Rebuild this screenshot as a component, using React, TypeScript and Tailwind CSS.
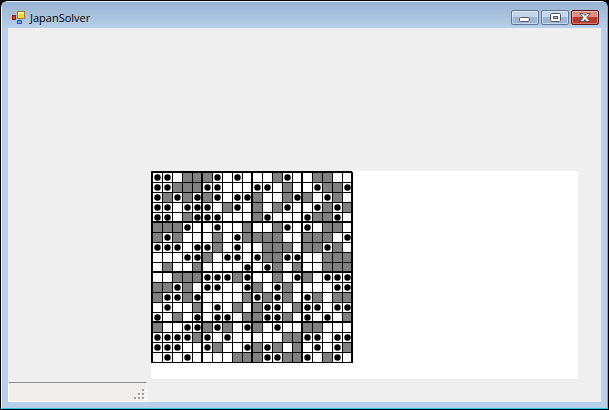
import React from "react";

const ROWS: string[] = [
  "oo.###o.o...#o..##..",
  "oo###oo...oo.#..o##o",
  "o#o#o#o.oo#..#o#.o#.",
  "oo.ooo.#o.#.#o..o#o#",
  "oo.#ooo...#o...o##o.",
  "###o..o..#..#o.o.##.",
  "#o#...#.o####..###.o",
  "ooo.oo#.o..###.##o#.",
  "...oo#.oo.o##oo..###",
  ".#..#....o.o#.#..###",
  "..###ooo#o..#.o#.ooo",
  "##o#.oo..o#.o#....oo",
  "#oo#o....#o#o#.o#.##",
  ".o..#.o.#.#oo.#oo.oo",
  "o.#.o.oo.##oo#.o.o.#",
  "#..oo#o#.o#.o..##...",
  "oooo#o.o.....##oo.oo",
  "ooo..o#..o#o#.#.o.o#",
  ".o.o....###oo##o.#o.",
];

const CELL = 10;

function Puzzle() {
  const cols = ROWS[0].length;
  const width = cols * CELL + 2;
  const height = ROWS.length * CELL + 2;
  return (
    <svg
      width={width}
      height={height}
      viewBox={`0 0 ${width} ${height}`}
      className="block"
      role="img"
      aria-label="Puzzle grid"
    >
      {ROWS.map((row, y) =>
        row.split("").map((c, x) => {
          if (c === "#") {
            return (
              <rect
                key={`${x}-${y}`}
                x={x * CELL + 1}
                y={y * CELL + 1}
                width={CELL}
                height={CELL}
                fill="#808080"
              />
            );
          }
          if (c === "o") {
            return (
              <circle
                key={`${x}-${y}`}
                cx={x * CELL + 6.5}
                cy={y * CELL + 6.5}
                r={3.2}
                fill="#000"
              />
            );
          }
          return null;
        }),
      )}
      {Array.from({ length: cols + 1 }, (_, i) => (
        <rect
          key={`v${i}`}
          x={i % 5 === 0 ? i * CELL : i * CELL + 1}
          y={i === cols ? 1 : 0}
          width={i % 5 === 0 ? 2 : 1}
          height={height - 1}
        />
      ))}
      {Array.from({ length: ROWS.length + 1 }, (_, i) => (
        <rect
          key={`h${i}`}
          x={0}
          y={i % 5 === 0 ? i * CELL : i * CELL + 1}
          width={width - 1}
          height={i % 5 === 0 ? 2 : 1}
        />
      ))}
    </svg>
  );
}

function AppIcon() {
  return (
    <svg width="14" height="14" viewBox="0 0 14 14" aria-hidden="true">
      <rect x="5.5" y="0.5" width="7" height="7" fill="#fcd54a" stroke="#a87a13" />
      <rect x="6" y="1" width="6" height="2" fill="#fff0a0" />
      <rect x="0.5" y="4.5" width="3" height="4" fill="#d8402a" stroke="#8e1b12" />
      <rect x="5.5" y="9.5" width="4" height="3" fill="#6da2f2" stroke="#2c56b8" />
    </svg>
  );
}

const CAPTION =
  "flex h-[15px] w-[28px] items-center justify-center rounded-[2px] border border-[#5f7793] bg-linear-to-b from-[#c3d5e9] from-50% to-[#9cb7d5] to-50% shadow-[inset_0_0_0_1px_rgba(255,255,255,0.45)]";

function TitleBar() {
  return (
    <header className="flex h-[26px] items-start bg-linear-to-b from-[#98b3d2] to-[#b7cfe8] pr-2 pl-[10px]">
      <div className="flex h-8 items-center gap-1">
        <AppIcon />
        <h1 className="font-['Open_Sans','Noto_Sans',sans-serif] text-[11px] leading-4 text-black">
          JapanSolver
        </h1>
      </div>
      <div className="ml-auto flex gap-[2px] pt-2">
        <button type="button" aria-label="Minimize" className={CAPTION}>
          <svg width="12" height="11" viewBox="0 0 12 11" aria-hidden="true">
            <rect x="0.5" y="5.5" width="10" height="4" rx="1" fill="#fff" stroke="#535666" />
          </svg>
        </button>
        <button type="button" aria-label="Maximize" className={CAPTION}>
          <svg width="11" height="11" viewBox="0 0 11 11" aria-hidden="true">
            <rect x="0.5" y="1.5" width="10" height="8" rx="1" fill="#fff" stroke="#535666" />
            <rect x="3.5" y="4.5" width="4" height="2" fill="#a8bfda" stroke="#535666" />
          </svg>
        </button>
        <button
          type="button"
          aria-label="Close"
          className="flex h-[15px] w-[28px] items-center justify-center rounded-[2px] border border-[#5a1a1a] bg-linear-to-b from-[#dd8e80] from-50% to-[#bb3a2c] to-50% shadow-[inset_0_0_0_1px_rgba(255,255,255,0.35)]"
        >
          <svg width="12" height="11" viewBox="0 0 12 11" aria-hidden="true">
            <path
              d="M1 1.5h3.2L6 3.5l1.8-2H11L7.9 5.5 11 9.5H7.8L6 7.5l-1.8 2H1l3.1-4z"
              fill="#fff"
              stroke="#535666"
            />
          </svg>
        </button>
      </div>
    </header>
  );
}

function SizeGrip() {
  return (
    <svg width="11" height="11" viewBox="0 0 11 11" aria-hidden="true">
      {[
        [8, 0],
        [4, 4],
        [8, 4],
        [0, 8],
        [4, 8],
        [8, 8],
      ].map(([x, y]) => (
        <g key={`${x}-${y}`}>
          <rect x={x + 1} y={y + 1} width="2" height="2" fill="#fff" />
          <rect x={x} y={y} width="2" height="2" fill="#a09c9c" />
        </g>
      ))}
    </svg>
  );
}

export default function App() {
  return (
    <div className="h-screen bg-black">
      <div className="flex h-full flex-col overflow-hidden rounded-t-[7px] border border-black bg-black">
        <div className="flex min-h-0 flex-1 flex-col overflow-hidden rounded-t-[6px] border border-t-[#e6eff8] border-r-[#27c8ee] border-b-[#27c8ee] border-l-[#e9f4fc] bg-[#b9d0ea]">
          <TitleBar />
          <div className="flex min-h-0 flex-1 bg-[#b9d0ea] px-[6px] pb-[6px]">
            <main className="flex min-w-0 flex-1 bg-[#efefef]">
              <aside className="flex w-[139px] flex-col justify-end">
                <footer className="flex h-[20px] items-end justify-end border border-t-[#8c8c8c] border-r-white border-b-white border-l-white bg-[#f0edec] pr-px pb-px">
                  <SizeGrip />
                </footer>
              </aside>
              <section className="min-w-0 flex-1 pt-[143px] pr-[23px] pb-[23px] pl-1">
                <div className="h-full bg-white">
                  <Puzzle />
                </div>
              </section>
            </main>
          </div>
        </div>
      </div>
    </div>
  );
}
